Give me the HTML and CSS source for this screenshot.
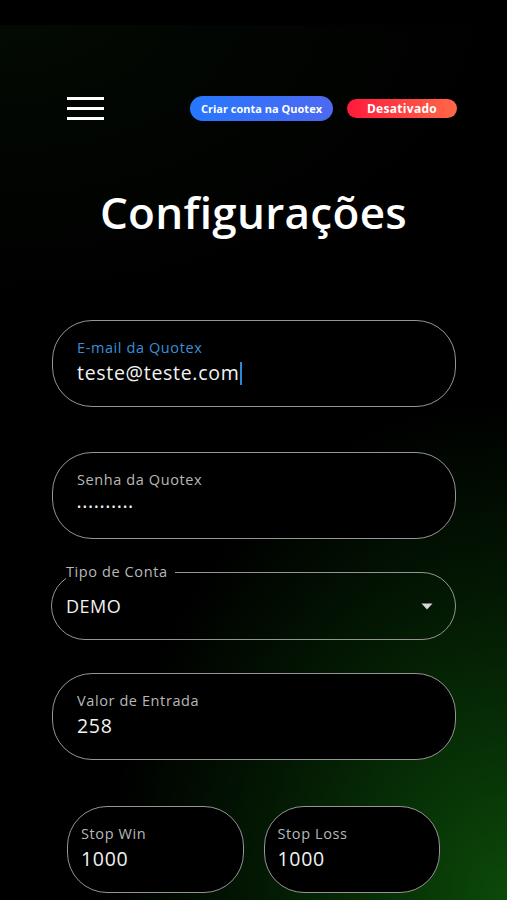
FILE: index.html
```html
<!DOCTYPE html>
<html lang="pt-BR">
    <head>
        <meta charset="utf-8">
        <meta name="viewport" content="width=device-width, initial-scale=1.0" />
        <title>Configurações</title>
        <link rel="stylesheet" href="styles.css">
    </head>
    <body>
        <div class="status"></div>
        <div class="app">
            <header class="topbar">
                <button class="menu" aria-label="Menu">
                    <span></span><span></span><span></span>
                </button>
                <div class="pills">
                    <a class="pill pill-blue" href="#">Criar conta na Quotex</a>
                    <span class="pill pill-red">Desativado</span>
                </div>
            </header>

            <h1>Configurações</h1>

            <form class="settings">
                <div class="field focused">
                    <label>E-mail da Quotex</label>
                    <div class="value">teste@teste.com<span class="caret"></span></div>
                </div>

                <div class="field">
                    <label>Senha da Quotex</label>
                    <div class="value dots">••••••••••</div>
                </div>

                <fieldset class="select">
                    <legend>Tipo de Conta</legend>
                    <div class="select-row">
                        <span>DEMO</span>
                        <svg width="12" height="7" viewBox="0 0 12 7"><path d="M0.5 0.5 L11.5 0.5 L6 6.5 Z" fill="#d8d8d8"/></svg>
                    </div>
                </fieldset>

                <div class="field">
                    <label>Valor de Entrada</label>
                    <div class="value">258</div>
                </div>

                <div class="stops">
                    <div class="field small">
                        <label>Stop Win</label>
                        <div class="value">1000</div>
                    </div>
                    <div class="field small">
                        <label>Stop Loss</label>
                        <div class="value">1000</div>
                    </div>
                </div>
            </form>
        </div>
    </body>
</html>
```

FILE: styles.css
```css
html, body {
    margin: 0;
    padding: 0;
    height: 900px;
    overflow: hidden;
}
body {
    font-family: "Open Sans", "Noto Sans", sans-serif;
    color: #fff;
    background:
        radial-gradient(ellipse 400px 500px at 100% 100%, #0c4a09 0%, #073106 30%, #031803 62%, rgba(0,0,0,0) 100%),
        radial-gradient(ellipse 500px 300px at 0% 0%, #030a03 0%, rgba(0,0,0,0) 100%),
        #000;
}
.status {
    height: 25px;
    background: #000;
}

/* top bar */
.topbar {
    display: flex;
    align-items: center;
    margin: 71px 50px 0 67px;
    height: 25px;
}
.menu {
    display: flex;
    flex-direction: column;
    gap: 7px;
    padding: 0;
    border: 0;
    background: none;
    width: 37px;
}
.menu span {
    display: block;
    height: 3px;
    background: #fff;
}
.pills {
    margin-left: auto;
    display: flex;
    align-items: center;
    gap: 14px;
}
.pill {
    display: inline-flex;
    align-items: center;
    justify-content: center;
    color: #fff;
    text-decoration: none;
    font-weight: 700;
    border-radius: 13px;
    white-space: nowrap;
}
.pill-blue {
    width: 143px;
    height: 25px;
    font-size: 11px;
    background: linear-gradient(90deg, #2677ff, #4d69f0);
}
.pill-red {
    width: 110px;
    height: 19px;
    font-size: 12px;
    letter-spacing: 0.3px;
    background: linear-gradient(90deg, #ff1a3c, #ff6848);
}

h1 {
    margin: 66px 0 0 0;
    text-align: center;
    font-size: 44px;
    line-height: 50px;
    font-weight: 600;
    letter-spacing: 0.3px;
}

/* form */
.settings {
    margin: 83px 51px 0 52px;
    display: flex;
    flex-direction: column;
}
.field {
    box-sizing: border-box;
    height: 87px;
    border: 1.5px solid #959595;
    border-radius: 40px;
    background: #000;
    padding: 18px 24px 0 24px;
    margin-bottom: 45px;
}
.field label {
    display: block;
    font-size: 14.5px;
    line-height: 18px;
    letter-spacing: 0.6px;
    color: #b8b8b8;
}
.field .value {
    margin-top: 4px;
    font-size: 19.5px;
    line-height: 24px;
    letter-spacing: 0.7px;
    color: #f2f2f2;
    display: flex;
    align-items: center;
}
.focused label {
    color: #3b8fda;
}
.caret {
    display: inline-block;
    width: 2px;
    height: 23px;
    margin-left: 1px;
    background: #2f87dd;
}
.value.dots {
    font-size: 11px;
    letter-spacing: 1.6px;
    padding-top: 2px;
}

.select {
    margin: -20px 0 0 -1px;
    padding: 0 22px 0 14px;
    height: 76px;
    box-sizing: border-box;
    border: 1.5px solid #959595;
    border-radius: 34px;
    min-width: 0;
}
.select legend {
    font-size: 14.5px;
    line-height: 16px;
    letter-spacing: 0.6px;
    color: #b8b8b8;
    padding: 0 7px 0 0;
    margin-left: 0;
}
.select-row {
    display: flex;
    align-items: center;
    justify-content: space-between;
    height: 52px;
    font-size: 18px;
    letter-spacing: 0.5px;
    color: #f2f2f2;
}

.select + .field {
    margin-top: 33px;
    margin-bottom: 46px;
}

.stops {
    display: flex;
    gap: 20px;
    margin: 0 16px 0 15px;
}
.field.small {
    flex: 1;
    padding-left: 13px;
    margin-bottom: 0;
}
```
